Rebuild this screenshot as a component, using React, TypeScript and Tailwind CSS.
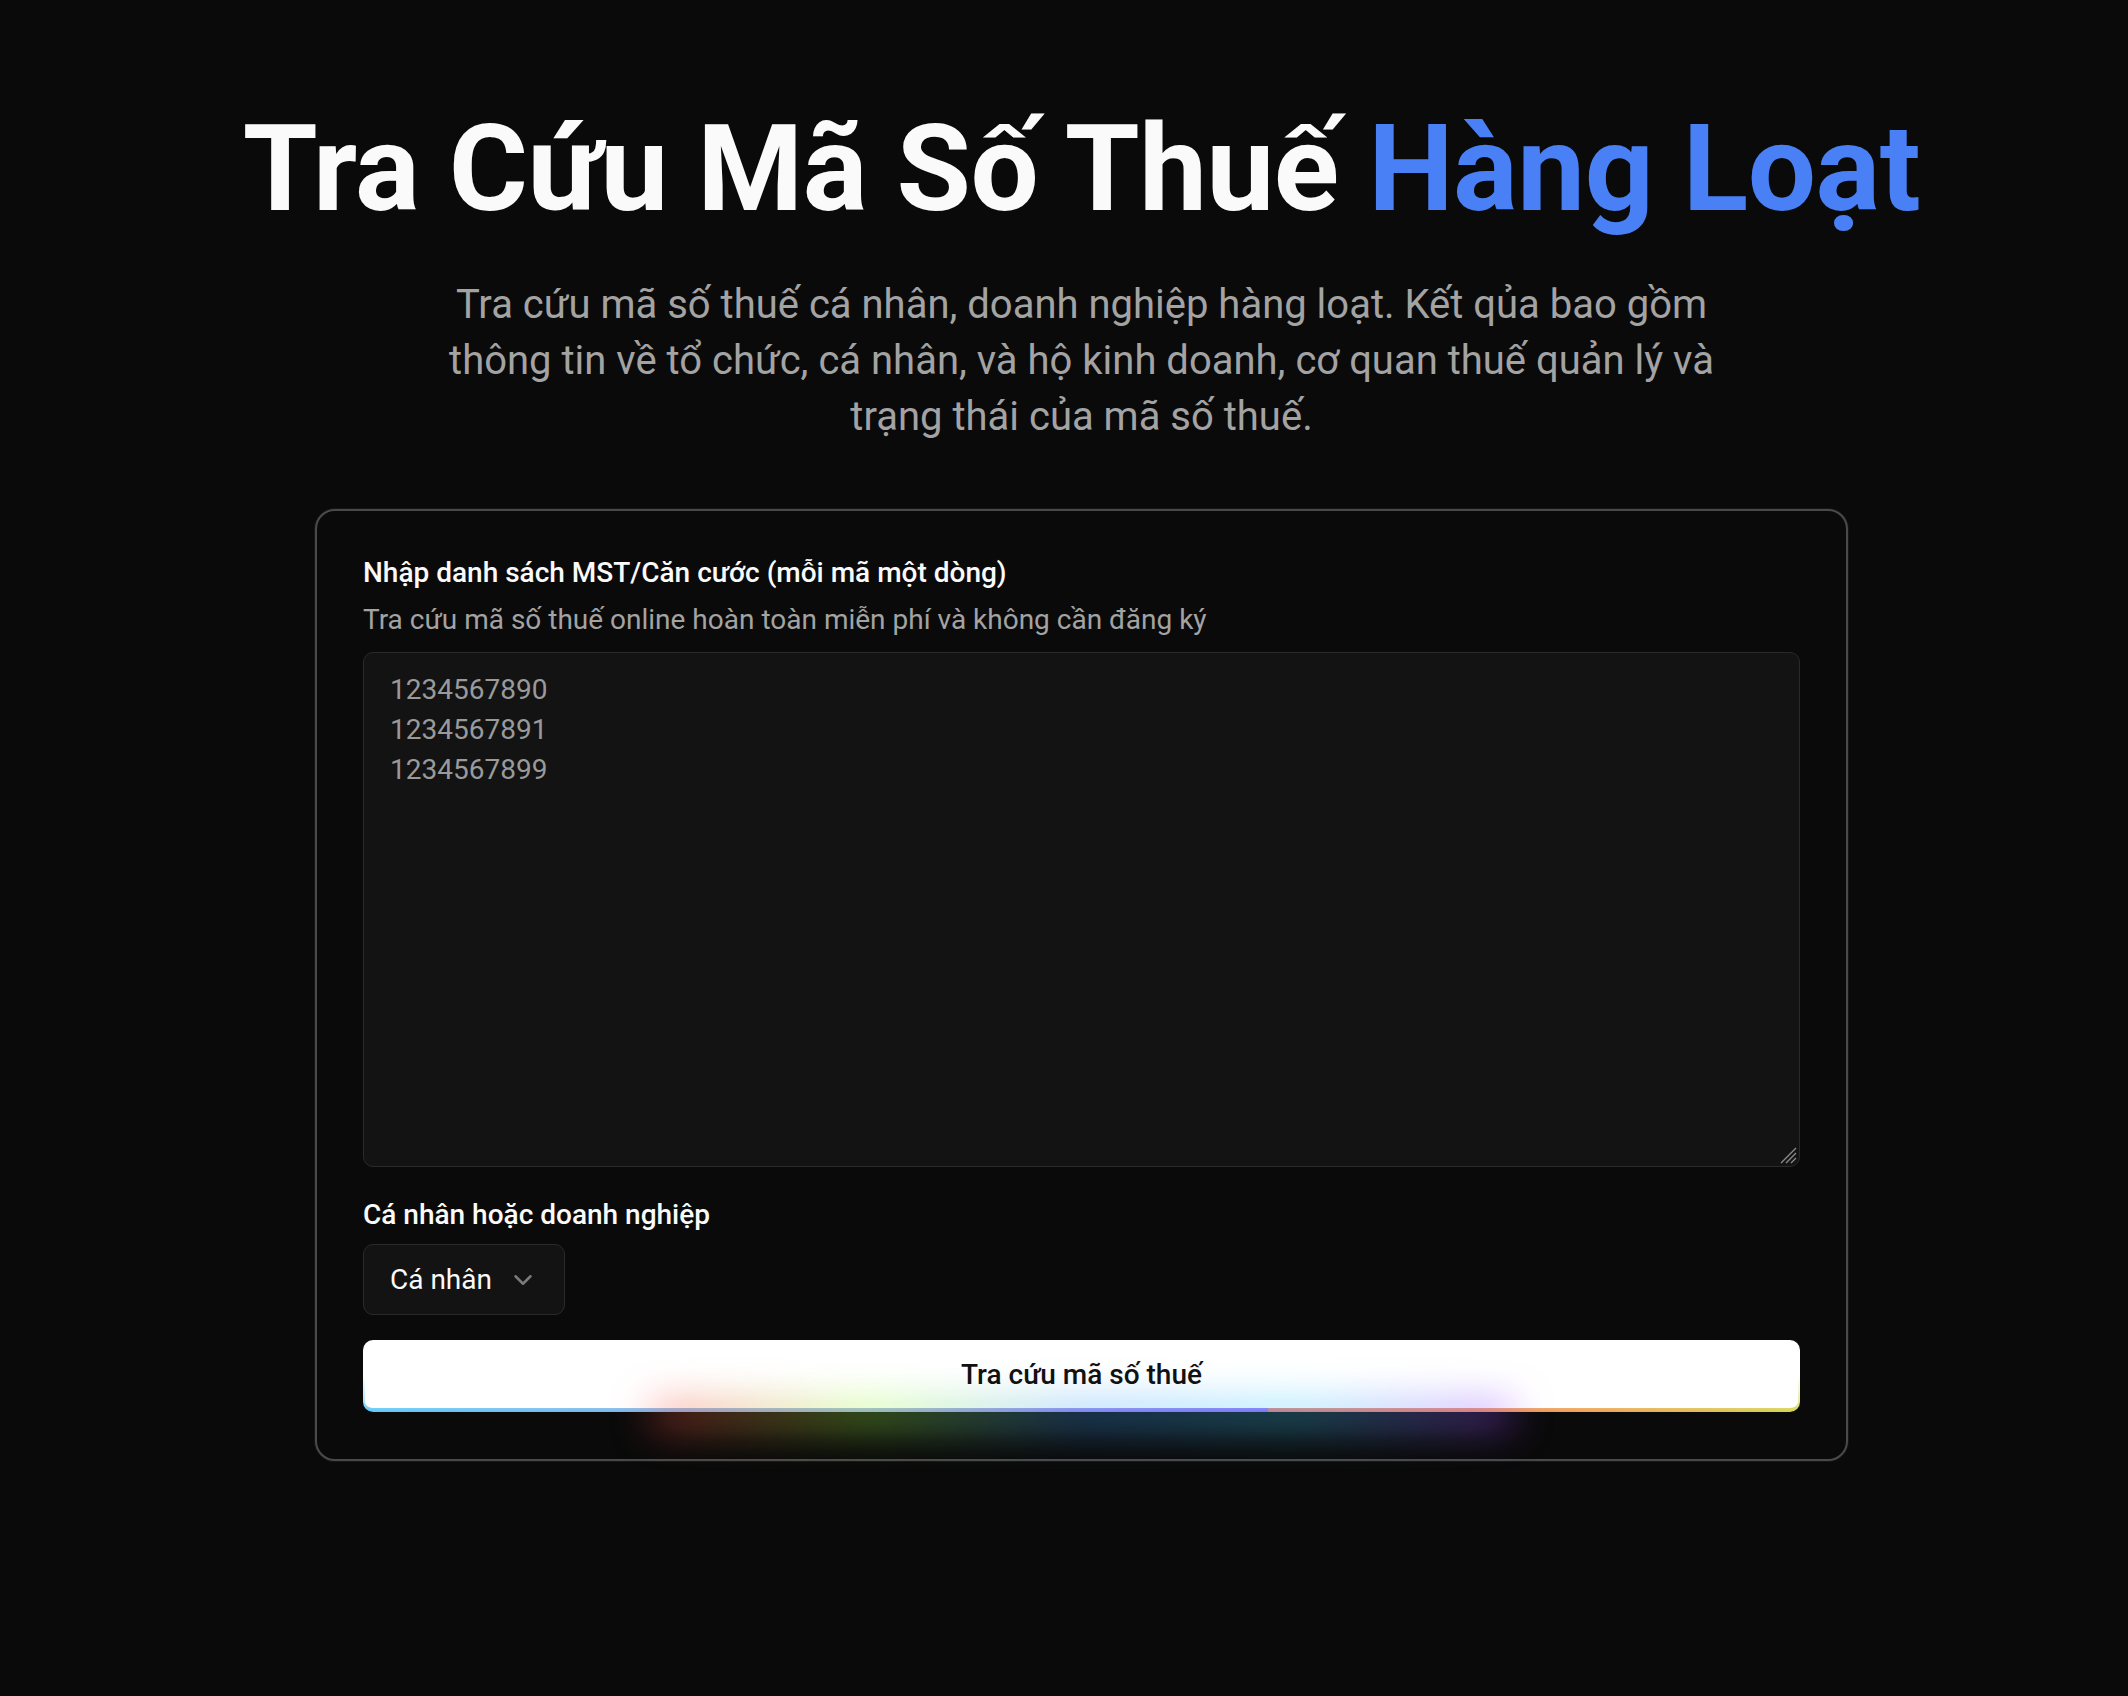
import { ChevronDown } from "lucide-react";

const SearchButton = () => {
	return (
		<button
			type="button"
			className="relative flex h-[72px] w-full items-center justify-center rounded-[10px] border-2 border-b-4 border-transparent bg-[linear-gradient(#fff,#fff),linear-gradient(#fff_50%,rgba(255,255,255,0.6)_80%,rgba(0,0,0,0)),linear-gradient(90deg,#5ac8fa,#98a6dc_35%,#8b5cf6_63%,#e06a6a_63%,#f0a050_85%,#d4d44c)] [background-clip:padding-box,border-box,border-box] [background-origin:border-box]"
		>
			<span className="absolute bottom-[-20%] left-1/2 h-1/5 w-3/5 -translate-x-1/2 bg-[linear-gradient(90deg,#ff4242,#a1ff42,#42a1ff,#42d0ff,#a142ff)] [filter:blur(21px)]" />
			<span className="relative z-10 text-[28px] font-medium text-[#111111]">Tra cứu mã số thuế</span>
		</button>
	);
};

const App = () => {
	return (
		<div className="min-h-screen bg-[#0a0a0a] pl-[35px] pt-[109px] pb-20 font-['Roboto',sans-serif] text-[#fafafa]">
			<div className="flex flex-col items-center">
				<h1 className="text-[121px] font-bold leading-none tracking-[-0.5px] text-[#fafafa]">
					Tra Cứu Mã Số Thuế <span className="text-[#4a80f5]">Hàng Loạt</span>
				</h1>
				<p className="mt-[47px] max-w-[1290px] text-center text-[40px] font-normal leading-[56px] text-[#a3a3a3]">
					Tra cứu mã số thuế cá nhân, doanh nghiệp hàng loạt. Kết qủa bao gồm thông tin về tổ chức, cá nhân, và hộ kinh doanh, cơ quan thuế quản lý và trạng thái của mã số thuế.
				</p>

				<div className="mt-[64px] w-[1533px] rounded-[20px] border-2 border-[#4a4a4a] bg-[#0a0a0a] px-[46px] pt-[44px] pb-[47px] shadow-[0_0_0_1px_rgba(255,255,255,0.05)]">
					<p className="text-[28px] font-medium leading-[36px] text-[#fafafa]">
						Nhập danh sách MST/Căn cước (mỗi mã một dòng)
					</p>
					<p className="mt-[11px] text-[28px] leading-[36px] text-[#a3a3a3]">
						Tra cứu mã số thuế online hoàn toàn miễn phí và không cần đăng ký
					</p>
					<div className="relative mt-[14px]">
						<textarea
							className="block h-[515px] w-full resize-none rounded-[10px] border border-[#2a2a2a] bg-[#131313] px-[26px] py-[17px] text-[28px] leading-[40px] text-[#fafafa] outline-none placeholder:text-[#9a9a9a]"
							placeholder={"1234567890\n1234567891\n1234567899"}
						/>
						<svg
							className="pointer-events-none absolute bottom-[3px] right-[3px]"
							width="20"
							height="20"
							viewBox="0 0 20 20"
						>
							<path d="M19 4 L4 19 M19 9 L9 19 M19 14 L14 19" stroke="#8a8a8a" strokeWidth="1.4" />
						</svg>
					</div>

					<p className="mt-[30px] text-[28px] font-medium leading-[36px] text-[#fafafa]">Cá nhân hoặc doanh nghiệp</p>
					<div className="mt-[11px] flex h-[71px] w-fit items-center gap-4 whitespace-nowrap rounded-[10px] border border-[#2a2a2a] bg-[#131313] px-[26px]">
						<span className="text-[28px] text-[#fafafa]">Cá nhân</span>
						<ChevronDown size={30} strokeWidth={2} className="shrink-0 text-[#7a7a7a]" />
					</div>

					<div className="mt-[25px]">
						<SearchButton />
					</div>
				</div>
			</div>
		</div>
	);
};

export default App;
